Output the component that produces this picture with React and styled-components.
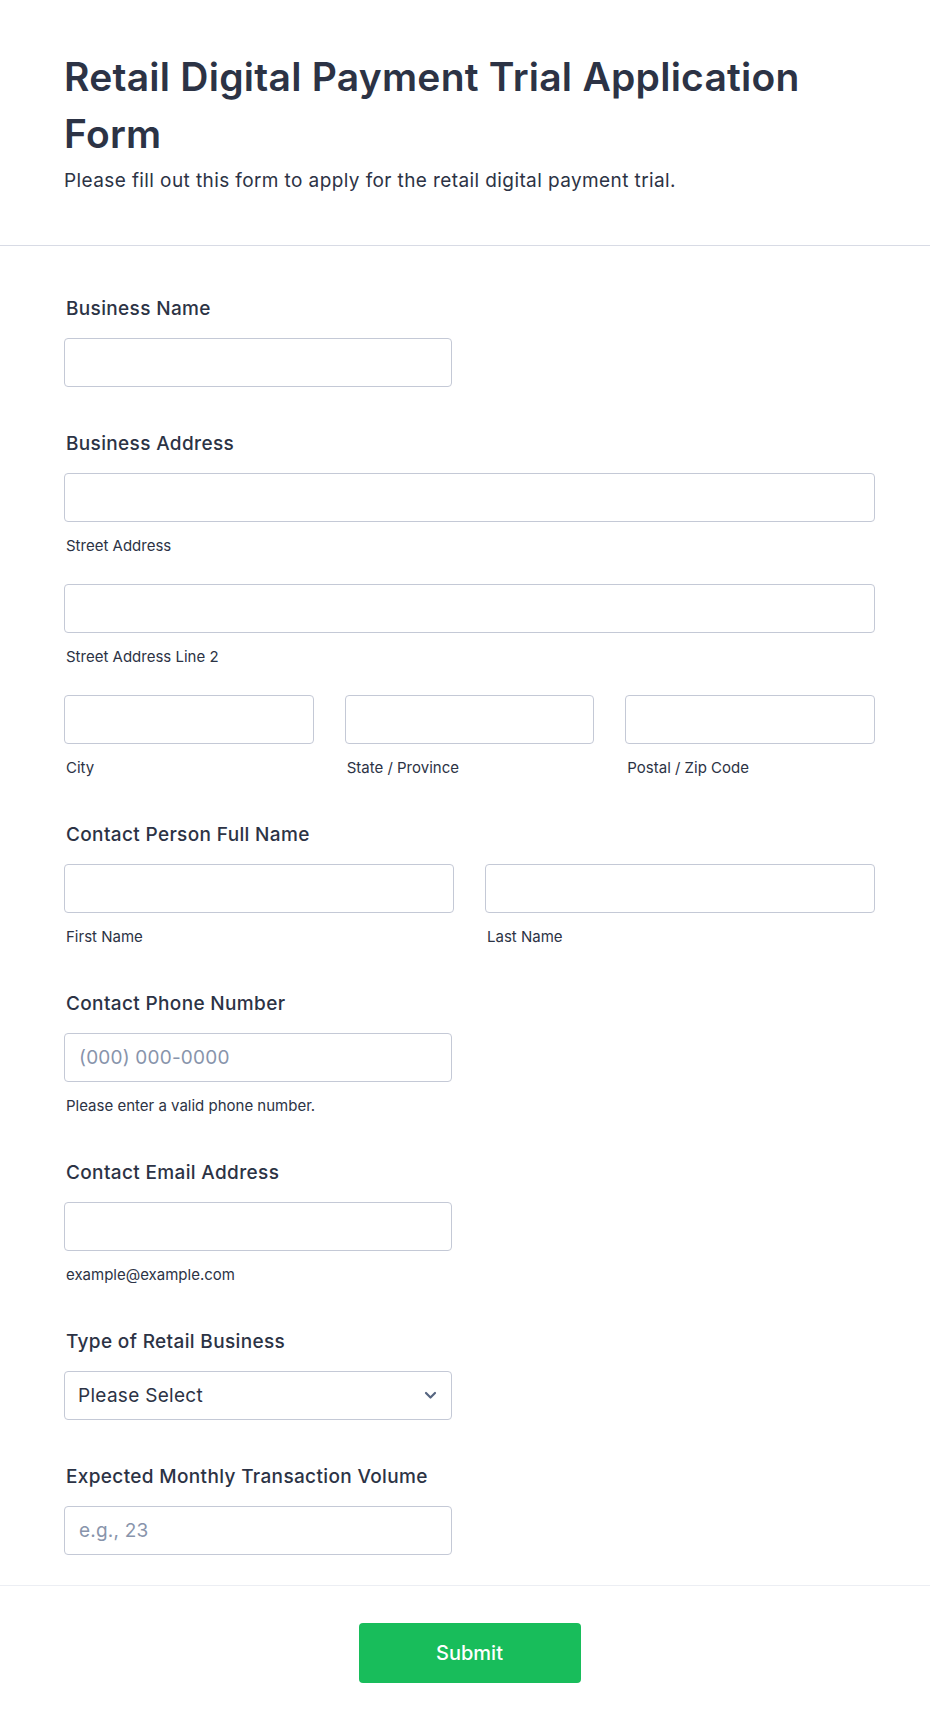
import React from "react";
import styled, { createGlobalStyle } from "styled-components";

const GlobalStyle = createGlobalStyle`
  html, body {
    margin: 0;
    padding: 0;
    background: #fff;
  }
  body {
    font-family: Inter, "Noto Sans", "Liberation Sans", sans-serif;
    color: #2c3345;
  }
  * {
    box-sizing: border-box;
  }
`;

const Page = styled.div`
  width: 930px;
  min-height: 1731px;
  background: #fff;
`;

const Header = styled.div`
  padding: 48px 55px 51px 64px;
  border-bottom: 1px solid #d8dbe5;
`;

const Title = styled.h1`
  margin: 0;
  font-size: 39px;
  line-height: 57px;
  font-weight: 600;
  letter-spacing: 0.25px;
  color: #2c3345;
`;

const SubTitle = styled.p`
  margin: 5px 0 0;
  font-size: 19px;
  line-height: 27px;
  font-weight: 400;
  letter-spacing: 0.4px;
`;

const Body = styled.div`
  padding: 51px 55px 30px 64px;
  border-bottom: 1px solid #eceef3;
`;

const Field = styled.div`
  margin-bottom: ${(p) => (p.last ? "0" : "45px")};
`;

const Label = styled.label`
  display: block;
  margin: 0 0 17px 2px;
  font-size: 19px;
  line-height: 24px;
  font-weight: 500;
  letter-spacing: 0.35px;
`;

const Row = styled.div`
  display: grid;
  grid-template-columns: ${(p) => `repeat(${p.cols}, 1fr)`};
  column-gap: 31px;
  & + & {
    margin-top: 28px;
  }
`;

const Cell = styled.div`
  display: flex;
  flex-direction: column;
`;

const Input = styled.input`
  display: block;
  width: ${(p) => p.w || "100%"};
  height: 49px;
  padding: 0 14px;
  border: 1px solid #c4c9d6;
  border-radius: 4px;
  background: #fff;
  font-family: inherit;
  font-size: 19px;
  letter-spacing: 0.2px;
  color: #2c3345;
  outline: none;
  &::placeholder {
    color: #8894ab;
  }
`;

const SubLabel = styled.span`
  display: block;
  margin: 14px 0 0 2px;
  font-size: 15px;
  line-height: 20px;
  color: #2c3345;
`;

const SelectBox = styled.div`
  width: 388px;
  height: 49px;
  padding: 0 14px 0 13px;
  border: 1px solid #c4c9d6;
  border-radius: 4px;
  display: flex;
  align-items: center;
  justify-content: space-between;
  font-size: 19px;
  letter-spacing: 0.3px;
  color: #2c3345;
`;

const Footer = styled.div`
  display: flex;
  justify-content: center;
  padding: 37px 55px 50px 64px;
`;

const SubmitBtn = styled.button`
  width: 222px;
  height: 60px;
  border: none;
  border-radius: 4px;
  background: #18bd5b;
  color: #fff;
  font-family: inherit;
  font-size: 20px;
  font-weight: 500;
  cursor: pointer;
`;

const Chevron = () => (
  <svg width="13" height="9" viewBox="0 0 13 9" fill="none">
    <polyline
      points="2,2 6.5,6.5 11,2"
      stroke="#566580"
      strokeWidth="2.2"
      strokeLinecap="round"
      strokeLinejoin="round"
    />
  </svg>
);

const App = () => {
  return (
    <Page>
      <GlobalStyle />
      <Header>
        <Title>Retail Digital Payment Trial Application Form</Title>
        <SubTitle>
          Please fill out this form to apply for the retail digital payment trial.
        </SubTitle>
      </Header>

      <Body>
        <Field>
          <Label>Business Name</Label>
          <Input w="388px" />
        </Field>

        <Field>
          <Label>Business Address</Label>
          <Row cols={1}>
            <Cell>
              <Input />
              <SubLabel>Street Address</SubLabel>
            </Cell>
          </Row>
          <Row cols={1}>
            <Cell>
              <Input />
              <SubLabel>Street Address Line 2</SubLabel>
            </Cell>
          </Row>
          <Row cols={3}>
            <Cell>
              <Input />
              <SubLabel>City</SubLabel>
            </Cell>
            <Cell>
              <Input />
              <SubLabel>State / Province</SubLabel>
            </Cell>
            <Cell>
              <Input />
              <SubLabel>Postal / Zip Code</SubLabel>
            </Cell>
          </Row>
        </Field>

        <Field>
          <Label>Contact Person Full Name</Label>
          <Row cols={2}>
            <Cell>
              <Input />
              <SubLabel>First Name</SubLabel>
            </Cell>
            <Cell>
              <Input />
              <SubLabel>Last Name</SubLabel>
            </Cell>
          </Row>
        </Field>

        <Field>
          <Label>Contact Phone Number</Label>
          <Input w="388px" placeholder="(000) 000-0000" />
          <SubLabel>Please enter a valid phone number.</SubLabel>
        </Field>

        <Field>
          <Label>Contact Email Address</Label>
          <Input w="388px" />
          <SubLabel>example@example.com</SubLabel>
        </Field>

        <Field>
          <Label>Type of Retail Business</Label>
          <SelectBox>
            <span>Please Select</span>
            <Chevron />
          </SelectBox>
        </Field>

        <Field last>
          <Label>Expected Monthly Transaction Volume</Label>
          <Input w="388px" placeholder="e.g., 23" />
        </Field>
      </Body>

      <Footer>
        <SubmitBtn>Submit</SubmitBtn>
      </Footer>
    </Page>
  );
};

export default App;
